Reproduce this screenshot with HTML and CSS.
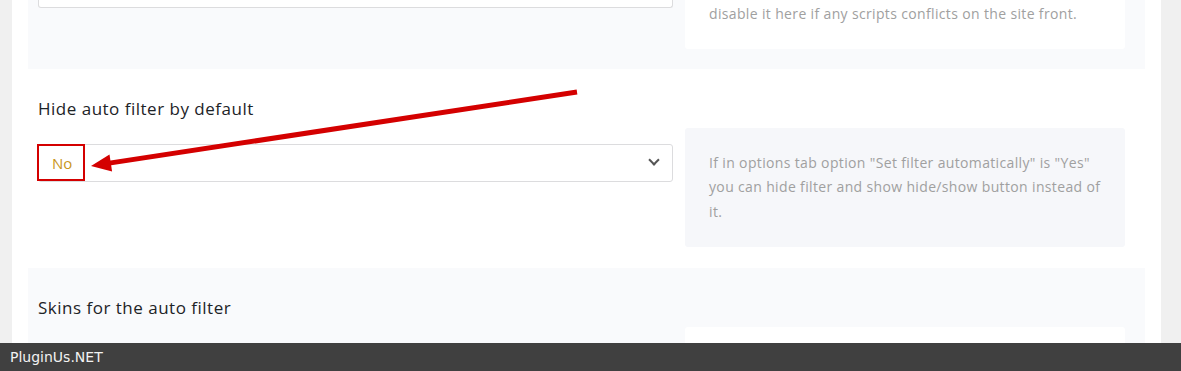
FILE: index.html
```html
<!DOCTYPE html>
<html lang="en">
<head>
  <meta charset="UTF-8">
  <meta name="viewport" content="width=device-width, initial-scale=1.0">
  <title>Options</title>
  <link rel="stylesheet" href="styles.css">
</head>
<body>
  <div class="page">
    <!-- tail of the previous option (page is scrolled) -->
    <div class="option alt option-tail">
      <div class="option-main">
        <div class="select-tail"></div>
      </div>
      <div class="option-info">
        disable it here if any scripts conflicts on the site front.
      </div>
    </div>

    <div class="option">
      <div class="option-main">
        <div class="option-title">Hide auto filter by default</div>
        <div class="select">
          <span class="select-value gold">No</span>
          <span class="select-arrow"></span>
        </div>
      </div>
      <div class="option-info">
        If in options tab option "Set filter automatically" is "Yes"
        you can hide filter and show hide/show button instead of it.
      </div>
    </div>

    <div class="option alt">
      <div class="option-main">
        <div class="option-title">Skins for the auto filter</div>
      </div>
      <div class="option-info empty"></div>
    </div>
  </div>

  <!-- annotation: red box + arrow pointing at the value -->
  <svg class="annot" width="1181" height="371" viewBox="0 0 1181 371">
    <rect x="38" y="145" width="46" height="35" fill="none" stroke="#d40000" stroke-width="2"/>
    <line x1="577" y1="92" x2="106" y2="163.6" stroke="#d40000" stroke-width="5"/>
    <polygon points="91,166 112.1,171.6 109.5,154.4" fill="#d40000"/>
  </svg>

  <div class="footer-bar">PluginUs.NET</div>
</body>
</html>
```

FILE: styles.css
```css
body {
  margin: 0;
  background: #f0f0f0;
  font-family: "Open Sans", Lato, sans-serif;
  overflow: hidden;
}

.page {
  margin: 0 20px 0 12px;
  padding: 0 16px;
  background: #fff;
}

/* one option row */
.option {
  display: flex;
  gap: 12px;
  padding: 28px 20px 21px 10px;
  background: #fff;
}
.option.alt {
  background: #f9fafc;
}

.option-main {
  width: 635px;
  flex-shrink: 0;
}

.option-title {
  font-size: 17px;
  letter-spacing: 0.5px;
  line-height: 24px;
  color: #1d2327;
  margin-bottom: 23px;
}

/* select box */
.select {
  display: flex;
  align-items: center;
  justify-content: space-between;
  height: 38px;
  box-sizing: border-box;
  padding: 0 14px 0 13px;
  background: #fff;
  border: 1px solid #dcdcde;
  border-radius: 3px;
  font-size: 15px;
  color: #2c3338;
}
.select-value.gold {
  color: #c9961a;
}
.select-arrow {
  width: 6px;
  height: 6px;
  border-right: 2px solid #555;
  border-bottom: 2px solid #555;
  transform: translateY(-3px) rotate(45deg);
}

/* description box */
.option-info {
  width: 440px;
  box-sizing: border-box;
  margin-top: 31px;
  padding: 23px 24px;
  background: #f6f7fa;
  border-radius: 3px;
  font-size: 14px;
  letter-spacing: 0.35px;
  line-height: 24.5px;
  color: #a0a0a0;
}
.option.alt .option-info {
  background: #fff;
}
.option-info.empty {
  height: 60px;
}

/* the option cut by the top edge */
.option-tail {
  padding-top: 0;
  padding-bottom: 20px;
}
.option-tail .option-info {
  margin-top: 0;
  padding-top: 2px;
  padding-bottom: 22px;
  border-radius: 0 0 3px 3px;
}
.select-tail {
  height: 8px;
  box-sizing: border-box;
  background: #fff;
  border: 1px solid #dcdcde;
  border-top: none;
  border-radius: 0 0 3px 3px;
}

.annot {
  position: absolute;
  left: 0;
  top: 0;
  pointer-events: none;
}

.footer-bar {
  position: fixed;
  left: 0;
  right: 0;
  bottom: 0;
  height: 28px;
  padding-left: 10px;
  background: #404040;
  color: #f2f2f2;
  font-family: "DejaVu Sans", sans-serif;
  font-size: 14px;
  line-height: 28px;
}
```
